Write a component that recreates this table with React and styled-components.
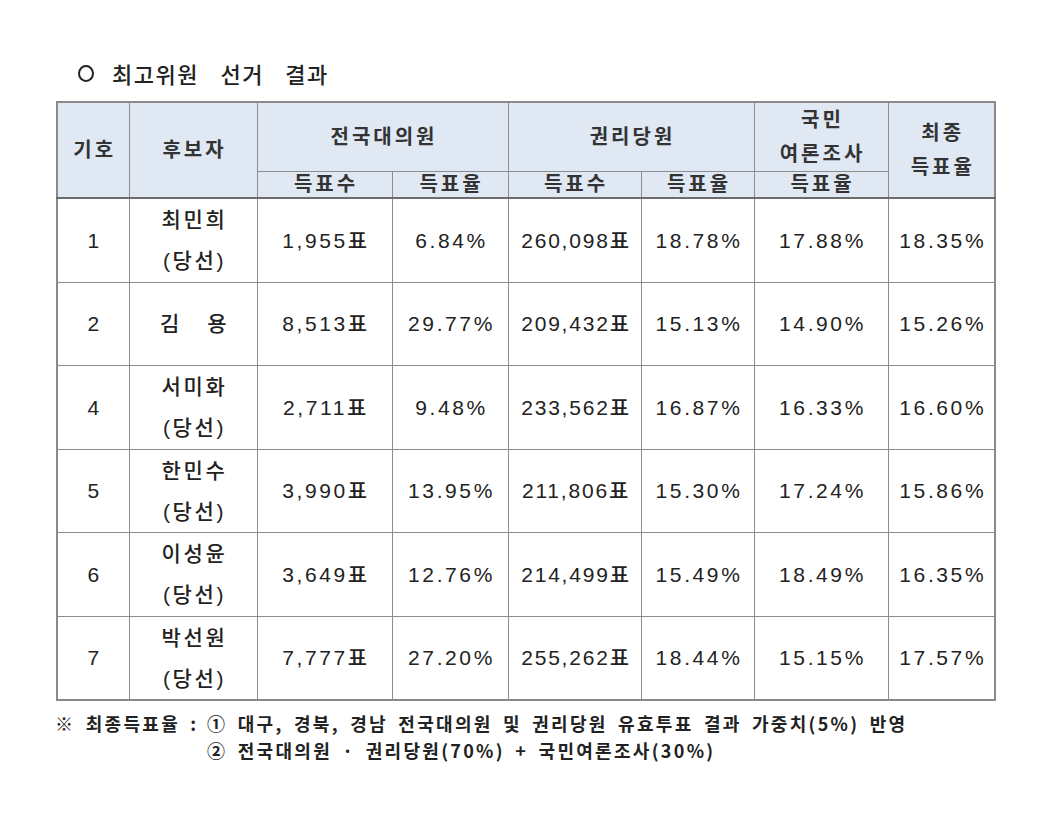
import React from "react";
import styled, {createGlobalStyle} from "styled-components";

const GlobalStyle = createGlobalStyle`
    html, body {
        margin: 0;
        padding: 0;
        background: #fff;
    }
`;

const Page = styled.div`
    width: 1056px;
    height: 833px;
    box-sizing: border-box;
    padding-top: 58px;
    font-family: "Liberation Sans", "Noto Sans CJK KR", sans-serif;
    color: #2b2b2b;
`;

const Title = styled.h2`
    margin: 0 0 13px 78px;
    font-family: "Noto Sans CJK KR", sans-serif;
    font-size: 22px;
    line-height: 30px;
    font-weight: 500;
    letter-spacing: 1.5px;
    word-spacing: 15px;
    color: #222;
    display: flex;
    align-items: center;
    gap: 18px;
`;

const Bullet = styled.span`
    flex: none;
    box-sizing: content-box;
    width: 12px;
    height: 13px;
    border: 2.5px solid #222;
    border-radius: 50%;
`;

const Table = styled.table`
    margin-left: 56px;
    width: 940px;
    border-collapse: collapse;
    table-layout: fixed;
    border: 2px solid #8a8a8a;
`;

const HeadCell = styled.th`
    background: #dfe8f3;
    border: 1px solid #8d8d8d;
    border-bottom: ${props => props.$last ? '2px solid #6c6c6c' : '1px solid #8d8d8d'};
    height: ${props => props.$sub ? '25px' : '62px'};
    padding: 0 0 0 3px;
    font-family: "Liberation Sans", "Noto Sans CJK KR", sans-serif;
    font-size: 20px;
    font-weight: 700;
    letter-spacing: 3px;
    line-height: ${props => props.$sub ? '25px' : '34px'};
    color: #333;
    text-align: center;
    vertical-align: middle;
`;

const Cell = styled.td`
    border: 1px solid #8d8d8d;
    height: 82.5px;
    padding: 0 0 0 3px;
    font-size: 21px;
    font-weight: 500;
    letter-spacing: ${props => props.$tight ? '1.8px' : '2.6px'};
    line-height: 41px;
    text-align: center;
    vertical-align: middle;
    white-space: pre;
    color: #222;
`;

const Note = styled.div`
    margin: 9px 0 0 55px;
    display: flex;
    font-family: "Noto Sans CJK KR", sans-serif;
    font-size: 18px;
    font-weight: 700;
    line-height: 27px;
    letter-spacing: 2.3px;
    word-spacing: 4px;
    color: #222;
`;

const NoteLabel = styled.span`
    width: 152px;
    flex: none;
    white-space: pre;
`;

const NoteLines = styled.div`
    display: flex;
    flex-direction: column;
    white-space: nowrap;
`;

const rows = [
    ['1', '최민희\n(당선)', '1,955표', '6.84%', '260,098표', '18.78%', '17.88%', '18.35%'],
    ['2', '김   용', '8,513표', '29.77%', '209,432표', '15.13%', '14.90%', '15.26%'],
    ['4', '서미화\n(당선)', '2,711표', '9.48%', '233,562표', '16.87%', '16.33%', '16.60%'],
    ['5', '한민수\n(당선)', '3,990표', '13.95%', '211,806표', '15.30%', '17.24%', '15.86%'],
    ['6', '이성윤\n(당선)', '3,649표', '12.76%', '214,499표', '15.49%', '18.49%', '16.35%'],
    ['7', '박선원\n(당선)', '7,777표', '27.20%', '255,262표', '18.44%', '15.15%', '17.57%'],
];

const widths = [72, 128, 135, 116, 133, 113, 134, 107];

export default function App() {
    return (
        <Page>
            <GlobalStyle/>
            <Title><Bullet/>최고위원 선거 결과</Title>
            <Table>
                <colgroup>
                    {widths.map((w, i) => <col key={i} style={{width: w}}/>)}
                </colgroup>
                <thead>
                    <tr>
                        <HeadCell rowSpan={2} $last>기호</HeadCell>
                        <HeadCell rowSpan={2} $last>후보자</HeadCell>
                        <HeadCell colSpan={2}>전국대의원</HeadCell>
                        <HeadCell colSpan={2}>권리당원</HeadCell>
                        <HeadCell>국민<br/>여론조사</HeadCell>
                        <HeadCell rowSpan={2} $last>최종<br/>득표율</HeadCell>
                    </tr>
                    <tr>
                        <HeadCell $sub $last>득표수</HeadCell>
                        <HeadCell $sub $last>득표율</HeadCell>
                        <HeadCell $sub $last>득표수</HeadCell>
                        <HeadCell $sub $last>득표율</HeadCell>
                        <HeadCell $sub $last>득표율</HeadCell>
                    </tr>
                </thead>
                <tbody>
                    {rows.map(r => (
                        <tr key={r[0]}>
                            {r.map((v, i) => <Cell key={i} $tight={i === 4}>{v}</Cell>)}
                        </tr>
                    ))}
                </tbody>
            </Table>
            <Note>
                <NoteLabel>※ 최종득표율 : </NoteLabel>
                <NoteLines>
                    <span>① 대구, 경북, 경남 전국대의원 및 권리당원 유효투표 결과 가중치(5%) 반영</span>
                    <span>② 전국대의원 · 권리당원(70%) + 국민여론조사(30%)</span>
                </NoteLines>
            </Note>
        </Page>
    );
}
